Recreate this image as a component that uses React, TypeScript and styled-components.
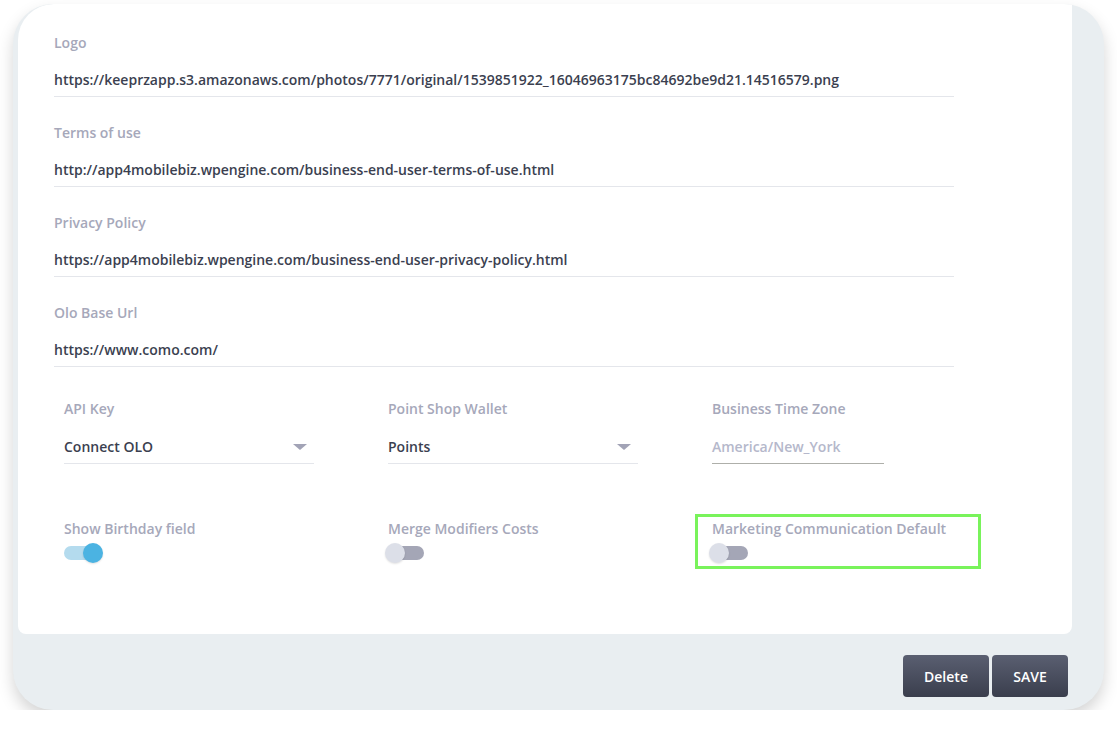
import styled, { createGlobalStyle } from 'styled-components';

const GlobalStyle = createGlobalStyle`
  html, body {
    margin: 0;
    padding: 0;
    background: #ffffff;
    font-family: 'Open Sans', 'Liberation Sans', sans-serif;
  }
  * { box-sizing: border-box; }
`;

const urlFields = [
  {
    label: 'Logo',
    value: 'https://keeprzapp.s3.amazonaws.com/photos/7771/original/1539851922_16046963175bc84692be9d21.14516579.png',
  },
  { label: 'Terms of use', value: 'http://app4mobilebiz.wpengine.com/business-end-user-terms-of-use.html' },
  { label: 'Privacy Policy', value: 'https://app4mobilebiz.wpengine.com/business-end-user-privacy-policy.html' },
  { label: 'Olo Base Url', value: 'https://www.como.com/' },
];

const toggles = [
  { label: 'Show Birthday field', on: true, highlight: false },
  { label: 'Merge Modifiers Costs', on: false, highlight: false },
  { label: 'Marketing Communication Default', on: false, highlight: true },
];

export default function App() {
  return (
    <>
      <GlobalStyle />
      <Frame>
        <Panel>
          {urlFields.map((f) => (
            <Field key={f.label}>
              <Label>{f.label}</Label>
              <Input>{f.value}</Input>
            </Field>
          ))}
          <Grid>
            <Cell>
              <Label>API Key</Label>
              <Select>
                <span>Connect OLO</span>
                <Caret />
              </Select>
            </Cell>
            <Cell>
              <Label>Point Shop Wallet</Label>
              <Select>
                <span>Points</span>
                <Caret />
              </Select>
            </Cell>
            <Cell>
              <Label>Business Time Zone</Label>
              <ZoneInput>America/New_York</ZoneInput>
            </Cell>
          </Grid>
          <ToggleGrid>
            {toggles.map((t) => (
              <Cell key={t.label}>
                {t.highlight && <Highlight />}
                <Label>{t.label}</Label>
                <Toggle $on={t.on}>
                  <Knob $on={t.on} />
                </Toggle>
              </Cell>
            ))}
          </ToggleGrid>
        </Panel>
        <Footer>
          <Button $w={86}>Delete</Button>
          <Button $w={76}>SAVE</Button>
        </Footer>
      </Frame>
    </>
  );
}

const Frame = styled.div`
  margin: 4px 0 0 13px;
  width: 1091px;
  height: 706px;
  border-radius: 40px;
  background: #e9eef1;
  box-shadow: 0 8px 16px rgba(0, 0, 0, 0.17);
  overflow: hidden;
  display: flex;
  flex-direction: column;
`;

const Panel = styled.div`
  margin: 0 32px 0 5px;
  height: 630px;
  background: #ffffff;
  border-radius: 36px 0 8px 8px;
  padding: 29px 0 0 36px;
`;

const Field = styled.div`
  width: 900px;
  margin-bottom: 26px;
`;

const Label = styled.div`
  font-size: 14px;
  line-height: 20px;
  font-weight: 600;
  color: #a6a8ba;
  white-space: nowrap;
`;

const Input = styled.div`
  margin-top: 17px;
  padding-bottom: 6px;
  font-size: 14px;
  line-height: 20px;
  font-weight: 600;
  color: #3b3f50;
  border-bottom: 1px solid #e4e6eb;
  white-space: nowrap;
`;

const Grid = styled.div`
  display: grid;
  grid-template-columns: 324px 324px 324px;
  padding-left: 10px;
  margin-top: 32px;
`;

const ToggleGrid = styled(Grid)`
  margin-top: 55px;
`;

const Cell = styled.div`
  position: relative;
`;

const Select = styled(Input)`
  width: 250px;
  margin-top: 18px;
  display: flex;
  align-items: center;
  justify-content: space-between;
  padding-right: 7px;
`;

const Caret = styled.span`
  width: 0;
  height: 0;
  border-left: 7px solid transparent;
  border-right: 7px solid transparent;
  border-top: 6px solid #a2a3b6;
`;

const ZoneInput = styled(Input)`
  width: 172px;
  margin-top: 18px;
  color: #b5b8cb;
  border-bottom-color: #aeafaa;
`;

const Toggle = styled.div<{ $on: boolean }>`
  position: relative;
  width: 36px;
  height: 14px;
  margin-top: 7px;
  margin-bottom: 3px;
  border-radius: 7px;
  background: ${(p) => (p.$on ? '#b4dbee' : '#a4a6b6')};
`;

const Knob = styled.div<{ $on: boolean }>`
  position: absolute;
  top: -3px;
  left: ${(p) => (p.$on ? '19px' : '-3px')};
  width: 20px;
  height: 20px;
  border-radius: 50%;
  background: ${(p) => (p.$on ? '#4bb3e2' : '#dcdfe8')};
  box-shadow: 0 1px 2px rgba(0, 0, 0, 0.12);
`;

const Highlight = styled.div`
  position: absolute;
  top: -5px;
  left: -17px;
  width: 286px;
  bottom: -6px;
  border: 3px solid #79f35b;
  pointer-events: none;
`;

const Footer = styled.div`
  display: flex;
  justify-content: flex-end;
  gap: 3px;
  padding: 21px 36px 0 0;
`;

const Button = styled.button<{ $w: number }>`
  width: ${(p) => p.$w}px;
  height: 42px;
  border: none;
  border-radius: 4px;
  background: linear-gradient(180deg, #5a5f71 0%, #3a3e4d 100%);
  color: #ffffff;
  font-family: 'Open Sans', 'Liberation Sans', sans-serif;
  font-size: 14px;
  font-weight: 600;
  cursor: pointer;
`;
